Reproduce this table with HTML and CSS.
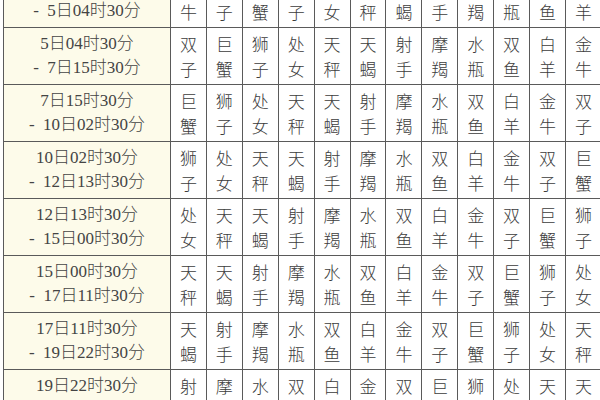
FILE: index.html
```html
<!DOCTYPE html>
<html lang="zh-CN">
<head>
<meta charset="utf-8">
<title>上升星座对照表</title>
<link rel="stylesheet" href="styles.css">
</head>
<body>
<div class="wrap">
<table class="chart">
  <colgroup>
    <col class="c-time">
    <col><col><col><col><col><col><col><col><col><col><col><col>
  </colgroup>
  <tbody>
    <tr>
      <td class="time">2日17时30分<br>-&nbsp;&nbsp;5日04时30分</td>
      <td>金<br>牛</td><td>双<br>子</td><td>巨<br>蟹</td><td>狮<br>子</td><td>处<br>女</td><td>天<br>秤</td><td>天<br>蝎</td><td>射<br>手</td><td>摩<br>羯</td><td>水<br>瓶</td><td>双<br>鱼</td><td>白<br>羊</td>
    </tr>
    <tr>
      <td class="time">5日04时30分<br>-&nbsp;&nbsp;7日15时30分</td>
      <td>双<br>子</td><td>巨<br>蟹</td><td>狮<br>子</td><td>处<br>女</td><td>天<br>秤</td><td>天<br>蝎</td><td>射<br>手</td><td>摩<br>羯</td><td>水<br>瓶</td><td>双<br>鱼</td><td>白<br>羊</td><td>金<br>牛</td>
    </tr>
    <tr>
      <td class="time">7日15时30分<br>-&nbsp;&nbsp;10日02时30分</td>
      <td>巨<br>蟹</td><td>狮<br>子</td><td>处<br>女</td><td>天<br>秤</td><td>天<br>蝎</td><td>射<br>手</td><td>摩<br>羯</td><td>水<br>瓶</td><td>双<br>鱼</td><td>白<br>羊</td><td>金<br>牛</td><td>双<br>子</td>
    </tr>
    <tr>
      <td class="time">10日02时30分<br>-&nbsp;&nbsp;12日13时30分</td>
      <td>狮<br>子</td><td>处<br>女</td><td>天<br>秤</td><td>天<br>蝎</td><td>射<br>手</td><td>摩<br>羯</td><td>水<br>瓶</td><td>双<br>鱼</td><td>白<br>羊</td><td>金<br>牛</td><td>双<br>子</td><td>巨<br>蟹</td>
    </tr>
    <tr>
      <td class="time">12日13时30分<br>-&nbsp;&nbsp;15日00时30分</td>
      <td>处<br>女</td><td>天<br>秤</td><td>天<br>蝎</td><td>射<br>手</td><td>摩<br>羯</td><td>水<br>瓶</td><td>双<br>鱼</td><td>白<br>羊</td><td>金<br>牛</td><td>双<br>子</td><td>巨<br>蟹</td><td>狮<br>子</td>
    </tr>
    <tr>
      <td class="time">15日00时30分<br>-&nbsp;&nbsp;17日11时30分</td>
      <td>天<br>秤</td><td>天<br>蝎</td><td>射<br>手</td><td>摩<br>羯</td><td>水<br>瓶</td><td>双<br>鱼</td><td>白<br>羊</td><td>金<br>牛</td><td>双<br>子</td><td>巨<br>蟹</td><td>狮<br>子</td><td>处<br>女</td>
    </tr>
    <tr>
      <td class="time">17日11时30分<br>-&nbsp;&nbsp;19日22时30分</td>
      <td>天<br>蝎</td><td>射<br>手</td><td>摩<br>羯</td><td>水<br>瓶</td><td>双<br>鱼</td><td>白<br>羊</td><td>金<br>牛</td><td>双<br>子</td><td>巨<br>蟹</td><td>狮<br>子</td><td>处<br>女</td><td>天<br>秤</td>
    </tr>
    <tr>
      <td class="time">19日22时30分<br>-&nbsp;&nbsp;22日09时30分</td>
      <td>射<br>手</td><td>摩<br>羯</td><td>水<br>瓶</td><td>双<br>鱼</td><td>白<br>羊</td><td>金<br>牛</td><td>双<br>子</td><td>巨<br>蟹</td><td>狮<br>子</td><td>处<br>女</td><td>天<br>秤</td><td>天<br>蝎</td>
    </tr>
  </tbody>
</table>
</div>
</body>
</html>
```
FILE: styles.css
```css
html, body {
  margin: 0;
  padding: 0;
  background: #ffffff;
}

.wrap {
  width: 600px;
  height: 400px;
  overflow: hidden;
  padding-left: 3px;
  box-sizing: border-box;
}

.chart {
  margin-top: -30px;
  width: 599px;
  table-layout: fixed;
  border-collapse: collapse;
  font-family: "Liberation Serif", "Noto Sans CJK SC", serif;
  font-size: 16px;
  color: #3a3a3a;
}

.chart .c-time {
  width: 167px;
}

.chart tr {
  height: 57px;
}

.chart td {
  border: 1px solid #5a5a5a;
  padding: 0;
  text-align: center;
  vertical-align: middle;
  line-height: 25px;
  background: #ffffff;
  font-family: "Noto Sans CJK SC", sans-serif;
  font-weight: 300;
  font-size: 17px;
  color: #3c3c3c;
}

.chart td.time {
  background: #fdfbea;
  font-family: "Liberation Serif", "Noto Sans CJK SC", serif;
  font-size: 17px;
  line-height: 24px;
  color: #444444;
  white-space: nowrap;
}
```
